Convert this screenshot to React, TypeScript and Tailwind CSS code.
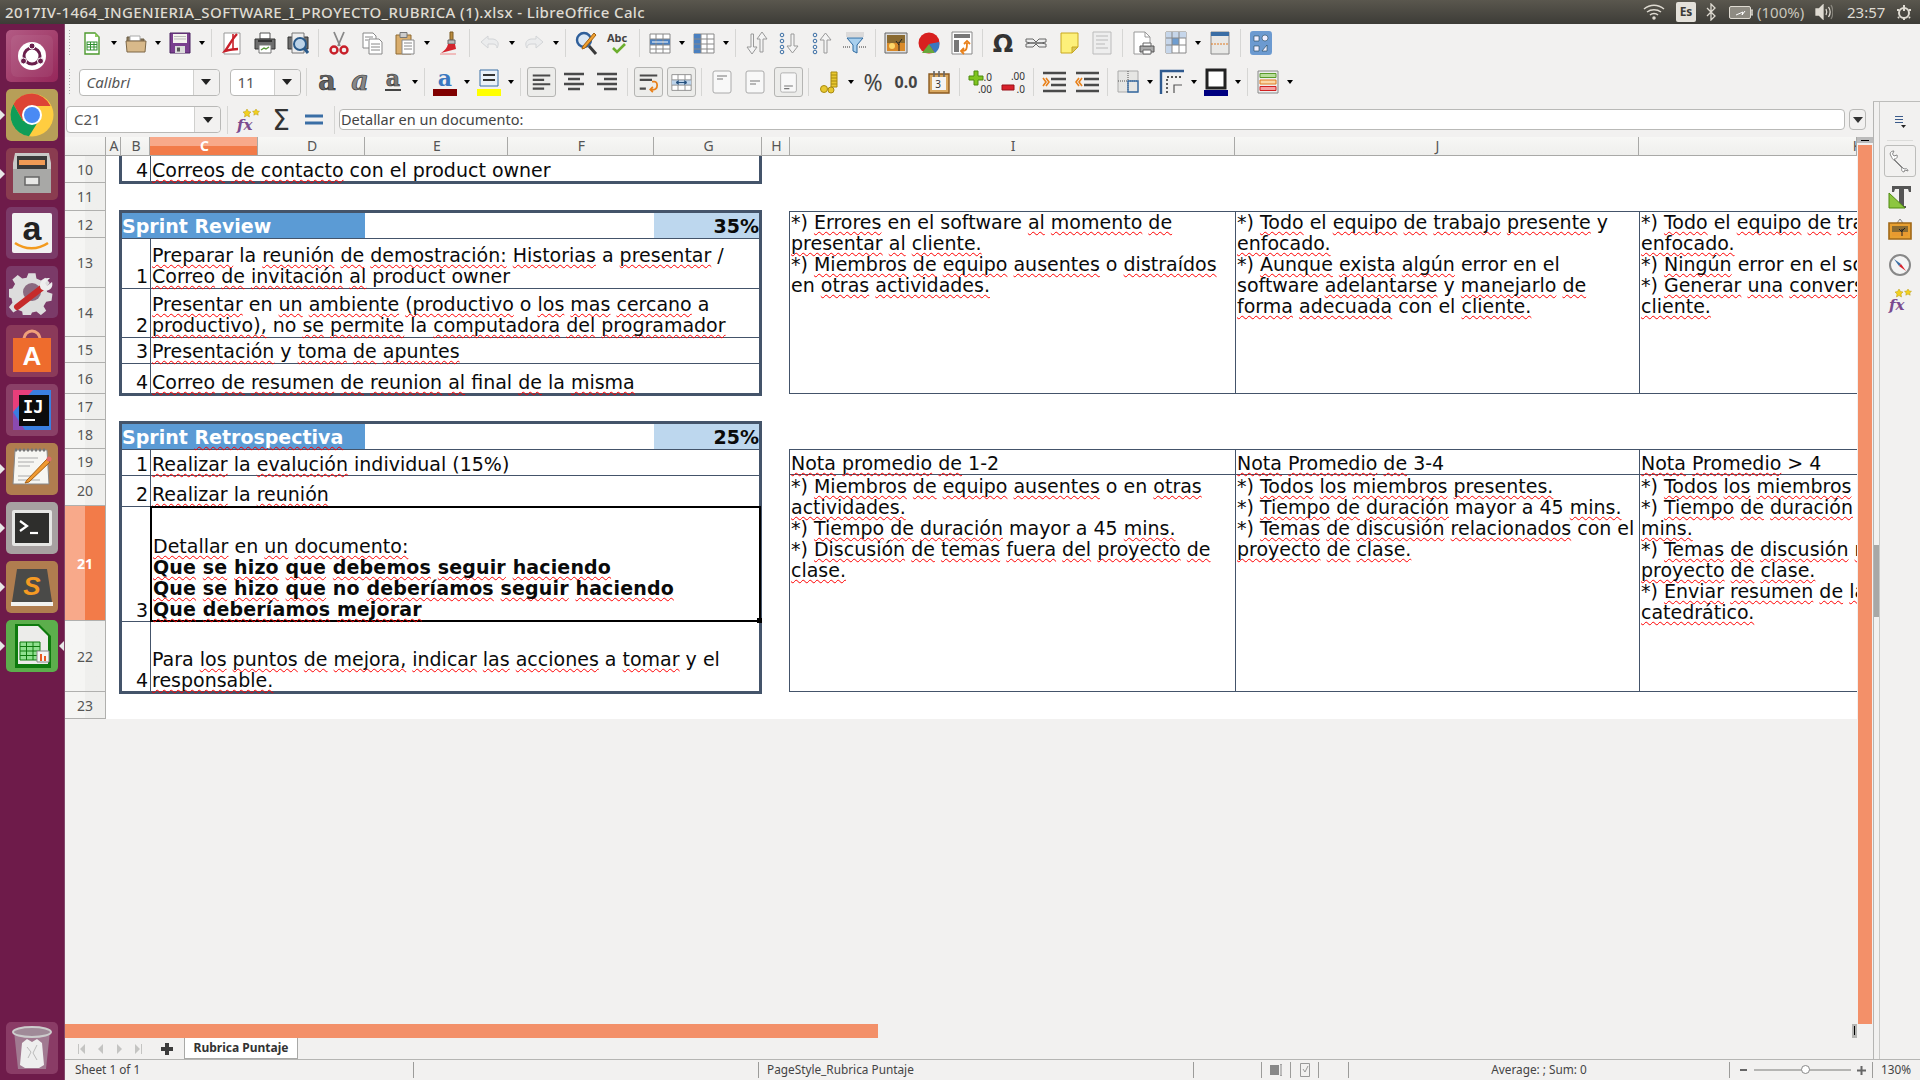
import type { ReactNode } from "react";

const UI = "font-['Noto_Sans',sans-serif]";

// "~word~" marks a word the spell checker flagged
function spell(line: string) {
  return line.split(/(~[^~]+~)/).map((part, i) =>
    part.startsWith("~") ? (
      <span
        key={i}
        className="underline decoration-wavy decoration-[#f00] decoration-1 underline-offset-[2px] [text-decoration-skip-ink:none]"
      >
        {part.slice(1, -1)}
      </span>
    ) : (
      <span key={i}>{part}</span>
    )
  );
}

const Svg = ({ children, s = 24 }: { children: ReactNode; s?: number }) => (
  <svg width={s} height={s} viewBox="0 0 24 24" fill="none" className="overflow-visible">
    {children}
  </svg>
);

const sheetGrid = (
  <>
    <rect x="7" y="11" width="10" height="8" fill="#fff" stroke="#2f8f2f" />
    <path d="M7 13.5h10M7 16h10M10.5 11v8M14 11v8" stroke="#2f8f2f" />
  </>
);

const lines = (d: string, w = 2, c = "#4a4a4a") => <path d={d} stroke={c} strokeWidth={w} />;

const icons: Record<string, ReactNode> = {
  new: (
    <>
      <path d="M5 2h10l4 4v17H5z" fill="#fff" stroke="#4e9a2e" strokeWidth="1.4" />
      <path d="M15 2l4 4h-4z" fill="#8fce5e" />
      {sheetGrid}
    </>
  ),
  open: (
    <>
      <path d="M3 6h7l2 2h8v4H3z" fill="#8c7a5c" stroke="#6b5c44" />
      <path d="M6 5h10v5H6z" fill="#fff" stroke="#aaa" />
      <path d="M2 10h20l-1 11H3z" fill="#d8b98a" stroke="#7c6747" />
    </>
  ),
  save: (
    <>
      <path d="M2 2h20v20H2z" fill="#7a3f8f" stroke="#4b2560" />
      <path d="M5 3h14v9H5z" fill="#f4f2ee" />
      <path d="M6 5.5h12M6 8h12" stroke="#bbb" />
      <path d="M7 15h10v7H7z" fill="#dcdcdc" />
      <path d="M9 16.5h3v4H9z" fill="#555" />
    </>
  ),
  pdf: (
    <>
      <path d="M4 2h16v21H4z" fill="#fff" stroke="#999" />
      <path d="M17 3C12 8 9 15 5 20c4-1 8-2 13-2" stroke="#c8202a" strokeWidth="2.4" />
      <path d="M13 3v15" stroke="#c8202a" strokeWidth="1.6" />
    </>
  ),
  print: (
    <>
      <path d="M7 2h10v6H7z" fill="#fff" stroke="#555" />
      <path d="M2 8h20v10H2z" fill="#6d6d6d" stroke="#333" />
      <path d="M5 10h14" stroke="#333" strokeWidth="2" />
      <path d="M6 14h12v8H6z" fill="#fff" stroke="#777" />
      <path d="M8 19l3-2 2 1 3-2" stroke="#5a9a3a" strokeWidth="1.4" />
    </>
  ),
  preview: (
    <>
      <path d="M2 6h20v12H2z" fill="#6d6d6d" stroke="#333" />
      <path d="M6 2h12v20H6z" fill="#eee" stroke="#777" />
      <circle cx="14" cy="13" r="6" fill="#bcd3e8" stroke="#2a5a8a" strokeWidth="2" />
      <path d="M18 17l4 5" stroke="#2a5a8a" strokeWidth="3" />
    </>
  ),
  cut: (
    <>
      <path d="M7 1l6 14M17 1l-6 14" stroke="#888" strokeWidth="1.8" />
      <circle cx="7" cy="19" r="3.5" stroke="#c8202a" strokeWidth="2.4" />
      <circle cx="17" cy="19" r="3.5" stroke="#c8202a" strokeWidth="2.4" />
    </>
  ),
  copy: (
    <>
      <path d="M3 2h10l3 3v12H3z" fill="#fff" stroke="#888" />
      <path d="M9 8h10l3 3v12H9z" fill="#fff" stroke="#888" />
      <path d="M5 6h8M5 9h3M11 13h9M11 16h9M11 19h9" stroke="#888" />
    </>
  ),
  paste: (
    <>
      <path d="M3 4h15v19H3z" fill="#d9ad6c" stroke="#8f6a32" />
      <path d="M7 1.5h7v5H7z" fill="#ccc" stroke="#777" />
      <path d="M9 9h12v14H9z" fill="#fff" stroke="#888" />
      <path d="M11 12h8M11 15h8M11 18h8" stroke="#888" />
    </>
  ),
  brush: (
    <>
      <path d="M13 1h3v8h-3z" fill="#b98b3e" stroke="#7c5a22" />
      <path d="M11 9h7v4h-7z" fill="#bbb" stroke="#666" />
      <path d="M11 13h7l1 5-15 4c4-3 6-5 7-9z" fill="#d3242c" />
      <path d="M3 23h16" stroke="#e88" />
    </>
  ),
  undo: (
    <g opacity=".35">
      <path d="M10 5L3 11l7 6v-4h5c3 0 4 2 4 4 2-3 2-8-4-9h-5z" fill="#dfe3e8" stroke="#9aa2aa" />
    </g>
  ),
  redo: (
    <g opacity=".35">
      <path d="M14 5l7 6-7 6v-4H9c-3 0-4 2-4 4-2-3-2-8 4-9h5z" fill="#dfe3e8" stroke="#9aa2aa" />
    </g>
  ),
  find: (
    <>
      <circle cx="10" cy="9" r="7" fill="#dbe8f5" stroke="#2f5f9a" strokeWidth="2.4" />
      <path d="M15 15l7 8" stroke="#3a3a3a" strokeWidth="3" />
      <path d="M20 2L9 15l-1 3 3-1L22 4z" fill="#f0a030" stroke="#a06010" />
    </>
  ),
  abc: (
    <>
      <text x="0" y="11" fontSize="11" fontWeight="700" fill="#444" fontFamily="Noto Sans">
        Abc
      </text>
      <path d="M6 17l4 4 8-8" stroke="#6cae2e" strokeWidth="2.6" />
    </>
  ),
  rows: (
    <>
      <path d="M2 3h20v19H2z" fill="#fff" stroke="#888" />
      <path d="M2 8h20v6H2z" fill="#4a80c0" />
      <path d="M2 8h20M2 14h20M2 18h20M8 3v19M15 3v19" stroke="#888" />
      <path d="M4 11h16" stroke="#fff" />
    </>
  ),
  cols: (
    <>
      <path d="M2 3h20v19H2z" fill="#fff" stroke="#888" />
      <path d="M2 3h7v19H2z" fill="#4a80c0" />
      <path d="M2 8h20M2 13h20M2 18h20M9 3v19M15 3v19" stroke="#888" />
    </>
  ),
  sort: (
    <>
      <path d="M7 3v13H3l5 7 5-7H9.5V3z" fill="#f4f4f4" stroke="#999" />
      <path d="M16 21V8h-3l5-7 5 7h-4v13z" fill="#f4f4f4" stroke="#999" />
    </>
  ),
  sortAsc: (
    <>
      <circle cx="5" cy="4" r="1.8" stroke="#3a6ea5" />
      <circle cx="5" cy="10" r="1.8" stroke="#3a6ea5" />
      <circle cx="5" cy="16" r="1.8" stroke="#3a6ea5" />
      <circle cx="5" cy="21" r="1.8" stroke="#3a6ea5" />
      <path d="M14 3v12h-4l5.5 7 5.5-7h-4V3z" fill="#f4f4f4" stroke="#999" />
    </>
  ),
  sortDesc: (
    <>
      <circle cx="5" cy="4" r="1.8" stroke="#3a6ea5" />
      <circle cx="5" cy="10" r="1.8" stroke="#3a6ea5" />
      <circle cx="5" cy="16" r="1.8" stroke="#3a6ea5" />
      <circle cx="5" cy="21" r="1.8" stroke="#3a6ea5" />
      <path d="M14 22V9h-4l5.5-7 5.5 7h-4v13z" fill="#f4f4f4" stroke="#999" />
    </>
  ),
  filter: (
    <>
      <path d="M3 1h18v5H3z" fill="#ccc" opacity=".6" />
      <path d="M4 7h16l-6 7v8l-4-2v-6z" fill="#a9d0ee" stroke="#2f6aa0" />
      <path d="M0 16h8M16 16h8" stroke="#333" strokeDasharray="1 1" />
    </>
  ),
  image: (
    <>
      <path d="M1 2h22v20H1z" fill="#ddd" stroke="#666" />
      <path d="M3 4h18v16H3z" fill="#d98a2a" />
      <path d="M3 4h18v8H3z" fill="#8a6a30" />
      <path d="M15 20v-9m0 3l-3-4m3 2l3-4" stroke="#222" />
      <circle cx="8" cy="15" r="3" fill="#fcd76a" />
    </>
  ),
  chart: (
    <>
      <circle cx="12" cy="12" r="10.5" fill="#d8201f" />
      <path d="M12 13L5 22h13z" fill="#6aa83a" />
      <path d="M12 13l10-2c1 4 0 8-4 11z" fill="#3a78c0" />
    </>
  ),
  pivot: (
    <>
      <path d="M2 1h20v22H2z" fill="#fff" stroke="#888" />
      <path d="M4 3h16v4H4zM4 9h5v12H4z" fill="#777" />
      <path d="M12 20c5 0 5-3 5-8M14 17l-3 3 3 3M14 13l3-3 3 3" stroke="#e8801a" strokeWidth="1.8" />
    </>
  ),
  omega: (
    <text x="12" y="21" textAnchor="middle" fontSize="24" fontWeight="700" fill="#333" fontFamily="DejaVu Sans">
      Ω
    </text>
  ),
  link: (
    <>
      <path d="M2 8h7l3 3 3-3h7v3l-5 1 5 1v3h-7l-3-3-3 3H2v-3l5-1-5-1z" fill="#eee" stroke="#666" />
      <path d="M7 12h10" stroke="#555" strokeWidth="1.4" />
    </>
  ),
  note: (
    <>
      <path d="M4 2h17v14l-6 6H4z" fill="#fdf07a" stroke="#c8a820" />
      <path d="M21 16h-6v6z" fill="#d9c85a" stroke="#c8a820" />
    </>
  ),
  header: (
    <>
      <path d="M3 1h18v22H3z" fill="#eee" stroke="#bbb" />
      {lines("M6 5h12M6 9h12M6 13h9M6 17h12", 1.4, "#ccc")}
    </>
  ),
  printArea: (
    <>
      <path d="M3 1h11l5 5v17H3z" fill="#fff" stroke="#999" />
      <path d="M14 1v5h5" stroke="#999" />
      <path d="M9 15h14v6H9z" fill="#aaa" stroke="#555" />
      <path d="M12 12h8v3h-8zM12 19h8v4h-8z" fill="#fff" stroke="#666" />
    </>
  ),
  freeze: (
    <>
      <path d="M2 1h20v21H2z" fill="#fff" stroke="#888" />
      <path d="M2 1h20v6H2zM2 7h6v15H2z" fill="#c6d6ea" />
      <path d="M8 7h7v7H8z" fill="#6e9dd0" />
      <path d="M8 1v21M15 1v21M2 7h20M2 14h20" stroke="#888" />
    </>
  ),
  split: (
    <>
      <path d="M3 1h18v22H3z" fill="#e8e8e6" stroke="#888" />
      <path d="M3 1h18v4H3z" fill="#3a6ea5" />
      <path d="M3 13h18" stroke="#e07b20" strokeDasharray="2 1" />
    </>
  ),
  navigator: (
    <>
      <rect x="1" y="0" width="22" height="24" rx="3" fill="#6c9ad0" />
      <path d="M5 5h5v5H5zM5 15h5v5H5z" fill="#eef" stroke="#245" strokeWidth=".6" />
      <circle cx="16" cy="7" r="3" fill="#eef" stroke="#245" strokeWidth=".6" />
      <path d="M13 20l5-6v6z" fill="#eef" stroke="#245" strokeWidth=".6" />
    </>
  ),
  bold: <text x="12" y="20" textAnchor="middle" fontSize="27" fontWeight="700" fill="#666" stroke="#333" strokeWidth=".7" fontFamily="DejaVu Serif">a</text>,
  italic: <text x="12" y="20" textAnchor="middle" fontSize="27" fontStyle="italic" fontWeight="700" fill="#888" stroke="#333" strokeWidth=".7" fontFamily="DejaVu Serif">a</text>,
  underline: (
    <>
      <text x="12" y="16" textAnchor="middle" fontSize="22" fontWeight="700" fill="#777" stroke="#333" strokeWidth=".6" fontFamily="DejaVu Serif">a</text>
      <path d="M4 20h16" stroke="#444" strokeWidth="2" />
    </>
  ),
  fontColor: (
    <>
      <text x="12" y="16" textAnchor="middle" fontSize="22" fontWeight="700" fill="#3a78c0" fontFamily="DejaVu Serif">a</text>
      <path d="M0 19h24v7H0z" fill="#800000" />
    </>
  ),
  highlight: (
    <>
      <path d="M3 0h18v16H3z" fill="#eaf1f8" stroke="#3a6ea5" />
      <path d="M6 5h12M6 10h12" stroke="#333" strokeWidth="2" />
      <path d="M0 19h24v7H0z" fill="#ffff00" />
    </>
  ),
  left: lines("M2 4h20M2 9h13M2 14h20M2 19h13", 2.4),
  center: lines("M2 4h20M6 9h12M2 14h20M6 19h12", 2.4),
  right: lines("M2 4h20M9 9h13M2 14h20M9 19h13", 2.4),
  wrap: (
    <>
      {lines("M2 4h20M2 9h14M2 19h7", 2.4)}
      <path d="M16 11h3c4 0 4 9-1 9h-4m3-3l-3 3 3 3" stroke="#e8801a" strokeWidth="2" />
    </>
  ),
  merge: (
    <>
      <path d="M1 3h22v18H1z" fill="#fff" stroke="#888" />
      <path d="M1 9h22v6H1z" fill="#bcd3ea" />
      <path d="M1 9h22M1 15h22M8 3v6M16 3v6M8 15v6M16 15v6" stroke="#888" />
      <path d="M6 12h12M6 12l3-2m-3 2l3 2M18 12l-3-2m3 2l-3 2" stroke="#24507e" strokeWidth="1.4" />
    </>
  ),
  top: (
    <>
      <rect x="3" y="1" width="18" height="22" rx="2" fill="#f8f8f8" stroke="#aaa" />
      {lines("M7 6h10M7 9h6", 1.2, "#777")}
    </>
  ),
  middle: (
    <>
      <rect x="3" y="1" width="18" height="22" rx="2" fill="#f8f8f8" stroke="#aaa" />
      {lines("M7 11h10M7 14h6", 1.2, "#777")}
    </>
  ),
  bottom: (
    <>
      <rect x="3" y="1" width="18" height="22" rx="2" fill="#f8f8f8" stroke="#aaa" />
      {lines("M7 16h10M7 19h6", 1.2, "#777")}
    </>
  ),
  currency: (
    <>
      <path d="M14 2h6v15h-6z" fill="#e8c830" stroke="#a88a10" />
      <path d="M14 5h6M14 8h6M14 11h6M14 14h6" stroke="#a88a10" />
      <circle cx="7" cy="19" r="3.5" fill="#e8c830" stroke="#a88a10" />
      <circle cx="14" cy="20" r="3" fill="#e8c830" stroke="#a88a10" />
    </>
  ),
  percent: (
    <text x="12" y="21" textAnchor="middle" fontSize="23" fill="#444" fontFamily="Noto Sans">
      %
    </text>
  ),
  number: (
    <text x="12" y="18" textAnchor="middle" fontSize="16" fontWeight="700" fill="#444" fontFamily="Noto Sans">
      0.0
    </text>
  ),
  date: (
    <>
      <path d="M2 4h20v19H2z" fill="#d9a860" stroke="#8a5a20" strokeWidth="1.4" />
      <path d="M5 7h14v13H5z" fill="#f4f4f4" />
      <path d="M7 1v6M12 1v6M17 1v6" stroke="#666" strokeWidth="1.6" />
      <text x="11" y="18" textAnchor="middle" fontSize="10" fill="#333" fontFamily="Noto Sans">3</text>
    </>
  ),
  addDec: (
    <>
      <path d="M6 1h4v5h5v4h-5v5H6v-5H1V6h5z" fill="#7fc41e" stroke="#4e8a10" />
      <text x="24" y="11" textAnchor="end" fontSize="10" fill="#333" fontFamily="Noto Sans">.0</text>
      <text x="24" y="23" textAnchor="end" fontSize="10" fill="#333" fontFamily="Noto Sans">.00</text>
    </>
  ),
  remDec: (
    <>
      <path d="M1 15h12v5H1z" fill="#d8202a" stroke="#981018" />
      <text x="24" y="10" textAnchor="end" fontSize="10" fill="#333" fontFamily="Noto Sans">.00</text>
      <text x="24" y="23" textAnchor="end" fontSize="10" fill="#333" fontFamily="Noto Sans">.0</text>
    </>
  ),
  indent: (
    <>
      {lines("M1 3h23M9 9h15M9 15h15M1 21h23", 2.4)}
      <path d="M1 8l3 4-3 4M4 8l3 4-3 4" stroke="#e8801a" strokeWidth="1.6" />
    </>
  ),
  outdent: (
    <>
      {lines("M1 3h23M9 9h15M9 15h15M1 21h23", 2.4)}
      <path d="M4 8l-3 4 3 4M7 8l-3 4 3 4" stroke="#e8801a" strokeWidth="1.6" />
    </>
  ),
  borders: (
    <>
      <path d="M2 1h20v21H2z" fill="#e6e6e4" stroke="#aaa" />
      <path d="M12 1v21M2 11h20" stroke="#555" strokeDasharray="1 1" />
      <path d="M12 11h10v11H12z" fill="none" stroke="#3a6ea5" strokeWidth="1.4" />
    </>
  ),
  borderStyle: (
    <>
      <path d="M1 24V1h23" stroke="#2f5a8f" strokeWidth="2.4" />
      <path d="M7 23V7h15" stroke="#222" strokeDasharray="2 2" strokeWidth="1.4" />
      <path d="M14 23v-8h8" stroke="#555" strokeWidth="1.2" />
    </>
  ),
  borderColor: (
    <>
      <path d="M3 0h18v18H3z" fill="#fff" stroke="#222" strokeWidth="3" />
      <path d="M0 20h24v6H0z" fill="#000080" />
    </>
  ),
  cond: (
    <>
      <path d="M2 1h20v22H2z" fill="#eee" stroke="#888" />
      <path d="M4 3.5h16v4H4z" fill="#b9dd9a" stroke="#5a9a2a" />
      <path d="M4 10h16v4H4z" fill="#fad7a8" stroke="#e07b20" />
      <path d="M4 16.5h16v4H4z" fill="#f5a0a0" stroke="#d02020" />
    </>
  ),
  fx: (
    <>
      <text x="1" y="22" fontSize="15" fontStyle="italic" fontWeight="700" fill="#7a4a8f" fontFamily="DejaVu Serif">fx</text>
      <path d="M11 1l1.5 2.5L15 4l-2 2 .5 3-2.5-1.5L8.500 9l.5-3-2-2 2.5-.5zM20 1l1.2 2 2.3.3-1.7 1.600.4 2.300-2.200-1.100-2.200 1.100.4-2.300L16.500 3.300l2.300-.3z" fill="#f2d020" stroke="#b89a10" strokeWidth=".5" />
    </>
  ),
  sigma: (
    <text x="12" y="22" textAnchor="middle" fontSize="28" fill="#333" fontFamily="DejaVu Sans">Σ</text>
  ),
  equal: <path d="M3 8h18M3 15h18" stroke="#3a6ea5" strokeWidth="3" />,
  wrench: (
    <path d="M3 7c-2-3 0-5 3-5L4.500 5l1.500 2 3-1c1 3-1 4-3 4l10 10c2-1 4 0 4 2l-3-1-1 2c-2 0-3-2-2-4L6 11C5 11 4 9 3 7z" fill="#fff" stroke="#888" />
  ),
  sideProps: (
    <>
      <path d="M4 1h19v6h-2l-1-3h-4v17h2v2h-9v-2h2V4H7L6 7H4z" fill="#555" />
      <path d="M1 23V8l16 15z" fill="#8cc63f" stroke="#4e8a10" />
    </>
  ),
  gallery: (
    <>
      <path d="M12 1l3 4H9z" stroke="#888" />
      <path d="M1 5h22v16H1z" fill="#e8a030" stroke="#a06818" strokeWidth="1.6" />
      <path d="M4 8h16v10H4z" fill="#8a6a30" />
      <path d="M4 14h16v4H4z" fill="#e89a30" />
      <path d="M14 18v-7m0 3l-3-3m3 2l3-3" stroke="#222" />
    </>
  ),
  compass: (
    <>
      <circle cx="12" cy="12" r="10" fill="#f4f4f4" stroke="#888" strokeWidth="2" />
      <path d="M6 6l7 5-2 2z" fill="#3a6ea5" />
      <path d="M18 18l-7-5 2-2z" fill="#d8202a" />
    </>
  ),
};

function Tool({ name, on, s = 24 }: { name: string; on?: boolean; s?: number }) {
  return (
    <div className="w-[33px] h-[30px] flex items-center justify-center shrink-0">
      <div className={on ? "w-[29px] h-[30px] flex items-center justify-center rounded-[3px] border border-[#b5b5b3] bg-[#ececea]" : "flex"}>
        <Svg s={on ? 21 : s}>{icons[name]}</Svg>
      </div>
    </div>
  );
}

const Arrow = () => (
  <div className="w-[11px] flex justify-center shrink-0">
    <div className="border-x-[3px] border-x-transparent border-t-[4px] border-t-black" />
  </div>
);

const Sep = () => (
  <div className="w-[8px] flex justify-center shrink-0">
    <div className="w-px h-[28px] bg-[#d6d6d4]" />
  </div>
);

function Tools({ items }: { items: string }) {
  return (
    <>
      {items.split(" ").map((it, i) =>
        it === "v" ? (
          <Arrow key={i} />
        ) : it === "|" ? (
          <Sep key={i} />
        ) : it.endsWith("!") ? (
          <Tool key={i} name={it.slice(0, -1)} on />
        ) : (
          <Tool key={i} name={it} />
        )
      )}
    </>
  );
}

function Combo({ w, text, italic }: { w: string; text: string; italic?: boolean }) {
  return (
    <div className={`${w} h-[27px] flex items-stretch border border-[#b9b9b7] rounded-[4px] bg-white shrink-0`}>
      <span className={`flex-1 pl-[7px] text-[15px] leading-[25px] text-[#555] ${italic ? "italic" : ""}`}>{text}</span>
      <span className="w-[26px] flex items-center justify-center border-l border-[#d0d0ce] bg-[#f2f1f0] rounded-r-[4px]">
        <span className="border-x-[5px] border-x-transparent border-t-[6px] border-t-[#222]" />
      </span>
    </div>
  );
}

function Tile({ bg, left, right, children }: { bg: string; left?: boolean; right?: boolean; children: ReactNode }) {
  return (
    <div className="relative w-[64px] h-[52px] flex shrink-0 pl-[6px]">
      {left && <span className="absolute left-0 top-[21px] border-y-[5px] border-y-transparent border-l-[5px] border-l-[#e8e8e8]" />}
      {right && <span className="absolute right-0 top-[21px] border-y-[5px] border-y-transparent border-r-[5px] border-r-[#e8e8e8]" />}
      <div className={`w-[52px] h-[52px] rounded-[5px] flex items-center justify-center ${bg}`}>
        <svg width="46" height="46" viewBox="0 0 46 46" fill="none">
          {children}
        </svg>
      </div>
    </div>
  );
}

function Launcher() {
  return (
    <div className="w-[65px] shrink-0 flex flex-col gap-[7px] pt-[6px] pb-[6px] bg-[#6e1b4a] border-r border-[#82486b]">
      <Tile bg="bg-linear-to-br from-[#b25a84] to-[#96265a]">
        <rect x="2" y="2" width="42" height="42" rx="6" fill="#fff" opacity=".06" />
        <circle cx="23" cy="23" r="14" fill="#fff" />
        <circle cx="23" cy="23" r="8" stroke="#6a1f4c" strokeWidth="3" />
        <circle cx="23" cy="13" r="3" fill="#6a1f4c" stroke="#fff" />
        <circle cx="14.5" cy="28" r="3" fill="#6a1f4c" stroke="#fff" />
        <circle cx="31.5" cy="28" r="3" fill="#6a1f4c" stroke="#fff" />
      </Tile>
      <Tile left bg="bg-[#b79f58]">
        <circle cx="23" cy="23" r="21.5" fill="#ffcd40" />
        <path d="M23 1.500A21.500 21.500 0 0 0 4.400 12.200L14 29 23 14h18.600A21.500 21.500 0 0 0 23 1.500z" fill="#dd4435" />
        <path d="M4.400 12.200A21.500 21.500 0 0 0 20 44.300L29.500 29 14 29z" fill="#0f9d58" />
        <circle cx="23" cy="23" r="10" fill="#fff" />
        <circle cx="23" cy="23" r="8" fill="#4a8af4" />
      </Tile>
      <Tile left bg="bg-[#8a3c50]">
        <path d="M6 2h34l2 10v30H4V12z" fill="#c9c9c7" />
        <path d="M8 5h30v14H8z" fill="#3a3a3a" />
        <path d="M10 9h26v5H10z" fill="#f09a55" />
        <path d="M4 18h38v24H4z" fill="#a8a8a6" />
        <path d="M16 26h14v8H16z" fill="#e8e8e6" stroke="#666" strokeWidth="1.5" />
      </Tile>
      <Tile bg="bg-[#7b3a68]">
        <rect x="3" y="3" width="40" height="40" rx="2" fill="#f2f2f2" />
        <text x="23" y="30" textAnchor="middle" fontSize="34" fontWeight="700" fill="#222" fontFamily="Liberation Sans">a</text>
        <path d="M6 33c10 7 23 7 33 0" stroke="#f39a1e" strokeWidth="2.5" />
      </Tile>
      <Tile bg="bg-[#7b3a68]">
        <path d="M19 2h8l1 6 5 2 5-3 5 6-4 5 1 5 6 2-1 8-6 1-3 5 3 5-6 5-5-4-5 1-2 5h-8l-1-6-5-2-5 3-5-6 4-5-1-5-6-2 1-8 6-1 3-5-3-5 6-5 5 4 5-1z" fill="#ddd" transform="translate(2.5 2.5) scale(.89)" />
        <circle cx="23" cy="23" r="9" fill="#8a6a80" />
        <path d="M8 38l26-20" stroke="#c62a2a" strokeWidth="6" strokeLinecap="round" />
        <path d="M32 20c-3-5 1-12 9-11l-5 5 2 3 5-4c2 7-5 11-11 7z" fill="#eee" />
      </Tile>
      <Tile bg="bg-[#8b3a5a]">
        <path d="M15 12c0-12 16-12 16 0" stroke="#f0a07a" strokeWidth="3" />
        <path d="M4 10h38v34H4z" fill="#ee6c2d" />
        <text x="23" y="37" textAnchor="middle" fontSize="26" fontWeight="700" fill="#fff" fontFamily="Liberation Sans">A</text>
      </Tile>
      <Tile bg="bg-[#8a4067]">
        <path d="M4 3h38v40H4z" fill="#3a7fe0" />
        <path d="M4 3h20L4 25z" fill="#e83e7a" />
        <path d="M4 25l12 18H4z" fill="#8a4ab0" />
        <path d="M10 8h30v31H10z" fill="#0c0c0c" />
        <text x="14" y="26" fontSize="17" fontWeight="700" fill="#fff" fontFamily="DejaVu Sans Mono">IJ</text>
        <path d="M14 33h12" stroke="#fff" strokeWidth="2" />
      </Tile>
      <Tile left bg="bg-[#b07d4f]">
        <path d="M6 4h32l2 34H4z" fill="#f6f6f2" stroke="#888" />
        <path d="M6 4h32" stroke="#777" strokeWidth="3" strokeDasharray="2 2" />
        <path d="M9 12h20M9 16h16M9 20h12M9 30h16M9 34h22" stroke="#aaa" />
        <path d="M18 34L38 13l3 3-21 20-4 1z" fill="#f09a30" stroke="#a86010" />
        <circle cx="40" cy="13" r="2.5" fill="#e06a6a" />
      </Tile>
      <Tile left bg="bg-[#a7a1a1]">
        <rect x="3" y="5" width="40" height="36" rx="2" fill="#e6e6e4" />
        <rect x="6" y="8" width="34" height="30" fill="#2e2e2c" />
        <path d="M11 16l7 5-7 5" stroke="#fff" strokeWidth="2.2" />
        <path d="M21 28h8" stroke="#fff" strokeWidth="2.2" />
      </Tile>
      <Tile left bg="bg-[#b07d4f]">
        <path d="M3 38L8 5h30l5 33z" fill="#4a4a48" />
        <path d="M2 38h42v4H2z" fill="#f2f2f0" />
        <text x="23" y="31" textAnchor="middle" fontSize="26" fontStyle="italic" fontWeight="700" fill="#f59a23" fontFamily="Liberation Sans">S</text>
      </Tile>
      <Tile left right bg="bg-[#5cae4c]">
        <path d="M6 1h24l12 12v32H6z" fill="#0e7a0e" />
        <path d="M9 3h20l10 10v28H9z" fill="#ececea" />
        <path d="M11 19h20v18H11z" fill="#8fe08f" stroke="#0e7a0e" />
        <path d="M11 23.5h20M11 28h20M11 32.5h20M17.5 19v18M24 19v18" stroke="#0e7a0e" />
        <path d="M28 28h12v11H28z" fill="#f4f4f4" stroke="#888" />
        <path d="M31 31v7h2v-7zM35 33v5h2v-5z" fill="#e85a20" />
      </Tile>
      <div className="mt-auto">
        <Tile bg="bg-[#8a3c66]">
          <path d="M5 6h36l-4 38H9z" fill="#a68a9c" opacity=".8" />
          <ellipse cx="23" cy="7" rx="19" ry="5" fill="#a08a98" stroke="#ccc" strokeWidth="2" />
          <path d="M13 18l5-4 5 3 5-3 5 4 2 22-5 3H16l-5-3z" fill="#eeeeee" />
          <path d="M18 22l4 5-3 6M28 20l-4 8 4 7" stroke="#bbb" />
        </Tile>
      </div>
    </div>
  );
}

function ColHead({ w, label, active, inner }: { w: string; label: string; active?: boolean; inner?: string }) {
  return (
    <div
      className={`${w} shrink-0 overflow-hidden border-r border-[#a9a9a7] text-[14px] leading-[18px] text-center pl-[2px] ${
        active ? "bg-linear-to-b from-[#f8a98a] from-50% to-[#f27b49] to-50% text-white font-bold" : "text-[#555]"
      }`}
    >
      <div className={inner}>{label}</div>
    </div>
  );
}

const rowHeads: [string, string][] = [
  ["10", "h-[27px]"],
  ["11", "h-[28px]"],
  ["12", "h-[27px]"],
  ["13", "h-[50px]"],
  ["14", "h-[49px]"],
  ["15", "h-[26px]"],
  ["16", "h-[31px]"],
  ["17", "h-[26px]"],
  ["18", "h-[29px]"],
  ["19", "h-[26px]"],
  ["20", "h-[31px]"],
  ["21", "h-[115px]"],
  ["22", "h-[71px]"],
  ["23", "h-[27px]"],
];

function Row({ h, n, children, last, lift }: { h: string; n: string; children?: ReactNode; last?: boolean; lift?: boolean }) {
  return (
    <div className={`${h} flex ${last ? "" : "border-b border-[#44546a]"}`}>
      <div className={`w-[29px] shrink-0 border-r border-[#44546a] self-stretch flex items-end justify-end pr-[2px] ${lift ? "pb-px" : ""}`}>{n}</div>
      <div className={`flex-1 pl-px self-end whitespace-nowrap ${lift ? "pb-px" : ""}`}>{children}</div>
    </div>
  );
}

function HeadRow({ title, pct }: { title: string; pct: string }) {
  return (
    <div className="h-[26px] flex border-b border-[#44546a] font-bold">
      <div className="w-[243px] bg-[#5b9bd5] text-white flex items-end pb-px whitespace-nowrap">
        <div>{spell(title)}</div>
      </div>
      <div className="flex-1" />
      <div className="w-[105px] bg-[#bdd7ee] flex items-end justify-end pb-px">{pct}</div>
    </div>
  );
}

function Lines({ rows }: { rows: string[] }) {
  return (
    <>
      {rows.map((r, i) => (
        <div key={i}>{spell(r)}</div>
      ))}
    </>
  );
}

function RightCell({ rows, last, top }: { rows: string[]; last?: boolean; top?: boolean }) {
  return (
    <div className={`h-full overflow-hidden whitespace-nowrap pl-px ${top ? "pt-px" : ""} ${last ? "" : "border-r border-[#44546a]"}`}>
      <Lines rows={rows} />
    </div>
  );
}

function Sheet() {
  return (
    <div className="flex-1 min-w-0 flex flex-col">
      <div className="h-[18px] flex border-b border-[#a9a9a7] bg-linear-to-b from-[#f7f7f5] to-[#efefed] box-content">
        <div className="w-[41px] shrink-0 border-r border-[#a9a9a7]" />
        <ColHead w="w-[15px]" label="A" />
        <ColHead w="w-[29px]" label="B" />
        <ColHead w="w-[108px]" label="C" active />
        <ColHead w="w-[107px]" label="D" />
        <ColHead w="w-[143px]" label="E" />
        <ColHead w="w-[146px]" label="F" />
        <ColHead w="w-[108px]" label="G" />
        <ColHead w="w-[28px]" label="H" />
        <ColHead w="w-[445px]" label="I" />
        <ColHead w="w-[404px]" label="J" />
        <ColHead w="w-[218px]" label="K" inner="w-[432px]" />
      </div>
      <div className="flex">
        <div className="w-[41px] shrink-0 flex flex-col">
          {rowHeads.map(([n, h]) => (
            <div
              key={n}
              className={`${h} flex items-center justify-center border-r border-b border-[#b0b0ae] text-[14px] ${
                n === "21"
                  ? "bg-linear-to-r from-[#f8a98a] from-50% to-[#f27b49] to-50% text-white font-bold"
                  : "bg-linear-to-r from-[#f5f5f3] from-50% to-[#efefed] to-50% text-[#555]"
              }`}
            >
              {n}
            </div>
          ))}
        </div>
        <div className="flex-1 min-w-0 bg-white overflow-hidden font-['DejaVu_Sans',sans-serif] text-[19px] leading-[21px] text-[#0a0a0a] grid grid-cols-[13px_643px_27px_446px_404px_218px] grid-rows-[28px_26px_186px_25px_273px_24px]">
          <div className="col-start-2 row-start-1 border-x-[3px] border-b-[3px] border-[#44546a]">
            <Row h="h-[25px]" n="4" last>
              {spell("~Correos~ ~de~ ~contacto~ con el product owner")}
            </Row>
          </div>

          <div className="col-start-2 row-start-3 border-[3px] border-[#44546a] flex flex-col">
            <HeadRow title="Sprint Review" pct="35%" />
            <Row h="h-[50px]" n="1" lift>
              <Lines rows={["~Preparar~ la ~reunión~ ~de~ ~demostración:~ ~Historias~ a ~presentar~ /", "~Correo~ ~de~ ~invitación~ ~al~ product owner"]} />
            </Row>
            <Row h="h-[49px]" n="2" lift>
              <Lines rows={["~Presentar~ en ~un~ ~ambiente~ ~(productivo~ o ~los~ ~mas~ ~cercano~ a", "~productivo),~ no ~se~ ~permite~ la ~computadora~ ~del~ ~programador~"]} />
            </Row>
            <Row h="h-[26px]" n="3" lift>
              {spell("~Presentación~ y ~toma~ ~de~ ~apuntes~")}
            </Row>
            <Row h="h-[29px]" n="4" last>
              {spell("~Correo~ ~de~ ~resumen~ ~de~ ~reunion~ ~al~ final ~de~ la ~misma~")}
            </Row>
          </div>

          <div className="col-start-4 col-span-3 row-start-3 mt-px mb-[2px] border-y border-l border-[#44546a] grid grid-cols-[446px_404px_218px]">
            <RightCell rows={["*) ~Errores~ en el software ~al~ ~momento~ ~de~", "~presentar~ ~al~ ~cliente.~", "*) ~Miembros~ ~de~ ~equipo~ ~ausentes~ o ~distraídos~", "en ~otras~ ~actividades.~"]} />
            <RightCell rows={["*) ~Todo~ el ~equipo~ ~de~ ~trabajo~ ~presente~ y", "~enfocado.~", "*) ~Aunque~ ~exista~ ~algún~ error en el", "software ~adelantarse~ y ~manejarlo~ ~de~", "~forma~ ~adecuada~ con el ~cliente.~"]} />
            <RightCell last rows={["*) ~Todo~ el ~equipo~ ~de~ ~trabajo~ ~presente~ y", "~enfocado.~", "*) ~Ningún~ error en el software", "*) ~Generar~ ~una~ ~conversación~ con el", "~cliente.~"]} />
          </div>

          <div className="col-start-2 row-start-5 border-[3px] border-[#44546a] flex flex-col">
            <HeadRow title="Sprint ~Retrospectiva~" pct="25%" />
            <Row h="h-[26px]" n="1">
              {spell("~Realizar~ la ~evalución~ individual (15%)")}
            </Row>
            <Row h="h-[31px]" n="2" lift>
              {spell("~Realizar~ la ~reunión~")}
            </Row>
            <div className="h-[115px] flex border-b border-[#44546a]">
              <div className="w-[29px] shrink-0 border-r border-[#44546a] flex items-end justify-end pr-[2px]">3</div>
              <div className="relative flex-1 -mt-px -mr-[2px] -mb-px -ml-px pl-px border-2 border-black flex flex-col justify-end whitespace-nowrap">
                <div>{spell("~Detallar~ en ~un~ ~documento:~")}</div>
                <div className="font-bold tracking-[0.15px]">
                  <Lines rows={["~Que~ ~se~ ~hizo~ ~que~ ~debemos~ ~seguir~ ~haciendo~", "~Que~ ~se~ ~hizo~ ~que~ no ~deberíamos~ ~seguir~ ~haciendo~", "~Que~ ~deberíamos~ ~mejorar~"]} />
                </div>
                <span className="absolute -right-[3px] -bottom-[3px] size-[5px] bg-black" />
              </div>
            </div>
            <Row h="h-[69px]" n="4" last>
              <Lines rows={["Para ~los~ ~puntos~ ~de~ ~mejora,~ ~indicar~ ~las~ ~acciones~ a ~tomar~ y el", "~responsable.~"]} />
            </Row>
          </div>

          <div className="col-start-4 col-span-3 row-start-5 mt-[28px] mb-[2px] border-y border-l border-[#44546a] grid grid-cols-[446px_404px_218px] grid-rows-[25px_1fr]">
            <div className="border-r border-b border-[#44546a] pl-px flex items-end whitespace-nowrap">
              <div>{spell("~Nota~ ~promedio~ ~de~ 1-2")}</div>
            </div>
            <div className="border-r border-b border-[#44546a] pl-px flex items-end whitespace-nowrap">
              <div>{spell("~Nota~ ~Promedio~ ~de~ 3-4")}</div>
            </div>
            <div className="border-b border-[#44546a] pl-px flex items-end whitespace-nowrap">
              <div>{spell("~Nota~ ~Promedio~ > 4")}</div>
            </div>
            <RightCell top rows={["*) ~Miembros~ ~de~ ~equipo~ ~ausentes~ o en ~otras~", "~actividades.~", "*) ~Tiempo~ ~de~ ~duración~ mayor a 45 ~mins.~", "*) ~Discusión~ ~de~ ~temas~ ~fuera~ ~del~ ~proyecto~ ~de~", "~clase.~"]} />
            <RightCell top rows={["*) ~Todos~ ~los~ ~miembros~ ~presentes.~", "*) ~Tiempo~ ~de~ ~duración~ mayor a 45 ~mins.~", "*) ~Temas~ ~de~ ~discusión~ ~relacionados~ con el", "~proyecto~ ~de~ ~clase.~"]} />
            <RightCell top last rows={["*) ~Todos~ ~los~ ~miembros~ ~presentes.~", "*) ~Tiempo~ ~de~ ~duración~ mayor a 45", "~mins.~", "*) ~Temas~ ~de~ ~discusión~ ~relacionados~ con el", "~proyecto~ ~de~ ~clase.~", "*) ~Enviar~ ~resumen~ ~de~ ~la~ reunión al", "~catedrático.~"]} />
          </div>
        </div>
      </div>
    </div>
  );
}

function StatusCell({ w, children, right }: { w: string; children?: ReactNode; right?: boolean }) {
  return (
    <div className={`${w} shrink-0 my-[2px] border-l border-[#9c9c9a] first:border-l-0 flex items-center ${right ? "justify-center" : "pl-[8px]"}`}>
      {children}
    </div>
  );
}

export default function App() {
  return (
    <div className={`${UI} w-[1920px] h-[1080px] overflow-hidden flex flex-col bg-[#f2f1f0] text-[#3c3c3c]`}>
      <div className="h-[24px] shrink-0 flex items-center bg-linear-to-b from-[#5a574e] to-[#3d3c37] text-[#dfdbd2]">
        <span className="pl-[5px] text-[15px] tracking-[0.4px] font-medium whitespace-nowrap">2017IV-1464_INGENIERIA_SOFTWARE_I_PROYECTO_RUBRICA (1).xlsx - LibreOffice Calc</span>
        <div className="ml-auto flex items-center h-full text-[15px] text-[#dfdbd2]">
          <svg width="22" height="16" viewBox="0 0 22 16" fill="none" stroke="#dfdbd2" strokeWidth="1.5">
            <path d="M1 5c6-5 14-5 20 0M4 8c4-3 10-3 14 0M7 11c2-2 6-2 8 0" />
            <circle cx="11" cy="14" r="1" fill="#dfdbd2" />
          </svg>
          <span className="ml-[11px] w-[20px] h-[20px] rounded-[2px] bg-[#e4e1da] text-[#3c3b37] text-[12px] font-bold flex items-center justify-center">Es</span>
          <svg className="ml-[10px]" width="10" height="18" viewBox="0 0 10 18" fill="none" stroke="#dfdbd2" strokeWidth="1.3">
            <path d="M1 5l8 8-4 4V1l4 4-8 8" />
          </svg>
          <svg className="ml-[13px]" width="24" height="13" viewBox="0 0 24 13" fill="#8e8b82" stroke="#dfdbd2">
            <rect x=".5" y=".5" width="21" height="12" rx="1.5" />
            <path d="M22 4h2v5h-2z" />
            <path d="M7 9l7-3-1 3 3-4" stroke="#fff" />
          </svg>
          <span className="ml-[4px] w-[46px] text-[#c9c6bc]">(100%)</span>
          <svg className="ml-[12px]" width="18" height="16" viewBox="0 0 18 16" fill="none" stroke="#dfdbd2" strokeWidth="1.3">
            <path d="M1 5h3l4-4v14l-4-4H1z" fill="#dfdbd2" />
            <path d="M11 5c1 2 1 4 0 6M13.5 3c2 3 2 7 0 10" />
            <path d="M16 1c2.5 4 2.5 10 0 14" opacity=".4" />
          </svg>
          <span className="ml-[14px] w-[36px]">23:57</span>
          <svg className="ml-[13px] mr-[8px]" width="16" height="16" viewBox="0 0 16 16" fill="none" stroke="#dfdbd2" strokeWidth="2">
            <circle cx="8" cy="9" r="5" />
            <path d="M8 1v6M1 6h2M13 6h2M2 14l1-1M13 13l1 1M8 14v2" />
          </svg>
        </div>
      </div>

      <div className="flex-1 min-h-0 flex">
        <Launcher />
        <div className="flex-1 min-w-0 flex flex-col">
          <div className="h-[38px] shrink-0 flex items-center pl-[3px]">
            <div className="w-[4px] h-[28px] mr-[3.5px] bg-[radial-gradient(#aaa_1px,transparent_1px)] bg-[length:3px_3px]" />
            <Tools items="new v open v save v | pdf print preview | cut copy paste v brush | undo v redo v | find abc | rows v cols v | sort sortAsc sortDesc filter | image chart pivot | omega link note header | printArea freeze v split | navigator" />
          </div>
          <div className="h-[40px] shrink-0 flex items-center pl-[3px]">
            <div className="w-[4px] h-[28px] mr-[6.5px] bg-[radial-gradient(#aaa_1px,transparent_1px)] bg-[length:3px_3px]" />
            <Combo w="w-[141px]" text="Calibri" italic />
            <div className="w-[10px] shrink-0" />
            <Combo w="w-[71px]" text="11" />
            <div className="w-[2px] shrink-0" />
            <Tools items="| bold italic underline v | fontColor v highlight v | left! center right | wrap! merge! | top middle bottom! | currency v percent number date | addDec remDec | indent outdent | borders v borderStyle v borderColor v | cond v" />
          </div>

          <div className="flex-1 min-h-0 flex">
            <div className="flex-1 min-w-0 flex flex-col">
              <div className="h-[35px] shrink-0 flex items-center">
                <div className="w-[1px] shrink-0" />
                <Combo w="w-[155px]" text="C21" />
                <div className="w-[2px] shrink-0" />
                <Tools items="| fx sigma equal |" />
                <div className="flex-1 h-[21px] ml-[1px] rounded-[4px] border border-[#b9b9b7] bg-white pl-[1px] text-[14.5px] leading-[19px] text-[#444]">
                  Detallar en un documento:
                </div>
                <div className="w-[17px] h-[21px] ml-[4px] mr-[7px] rounded-[4px] border border-[#b9b9b7] flex items-center justify-center">
                  <span className="border-x-[5px] border-x-transparent border-t-[6px] border-t-[#333]" />
                </div>
              </div>

              <div className="flex-1 min-h-0 flex">
                <Sheet />
                <div className="w-[16px] shrink-0 flex flex-col">
                  <div className="h-[6px] mb-[2px] bg-[#bbb] flex items-center justify-center">
                    <span className="w-[8px] h-px bg-black" />
                  </div>
                  <div className="flex-1 ml-px mr-px bg-[#f39069]" />
                </div>
              </div>

              <div className="h-[14px] shrink-0 flex">
                <div className="w-[813px] bg-[#f39069]" />
                <div className="ml-auto mr-[16px] w-[5px] bg-[#b5b5b3] flex justify-center">
                  <span className="w-px h-[9px] mt-[2px] bg-black" />
                </div>
              </div>
              <div className="h-[21px] shrink-0 flex items-center">
                <div className="w-[92px] flex items-center pl-[13px] gap-[12px]">
                  <svg width="7" height="10" viewBox="0 0 7 10" fill="#c4c4c2"><path d="M0 0h1v10H0zM7 0v10L2 5z" /></svg>
                  <svg width="7" height="10" viewBox="0 0 7 10" fill="#c4c4c2"><path d="M6 0v10L1 5z" /></svg>
                  <svg width="7" height="10" viewBox="0 0 7 10" fill="#c4c4c2"><path d="M1 0v10l5-5z" /></svg>
                  <svg width="7" height="10" viewBox="0 0 7 10" fill="#c4c4c2"><path d="M0 0v10l5-5zM6 0h1v10H6z" /></svg>
                </div>
                <svg className="ml-[3px]" width="14" height="14" viewBox="0 0 14 14" fill="#3c3c3c"><path d="M5 1h4v4h4v4H9v4H5V9H1V5h4z" /></svg>
                <div className="ml-[10px] w-[114px] h-full bg-white border-x border-b border-[#a9a9a7] flex items-center justify-center text-[12px] font-bold text-[#333]">
                  Rubrica Puntaje
                </div>
              </div>
            </div>

            <div className="w-[47px] shrink-0 flex border-t border-[#bdbdbb] -mt-px">
              <div className="w-[6px] border-l border-[#b5b5b3] flex items-center">
                <div className="w-[5px] h-[72px] bg-[#a8a8a6]" />
              </div>
              <div className="flex-1 border-l border-[#c8c8c6] flex flex-col items-center pt-[13px]">
                <svg width="12" height="14" viewBox="0 0 12 14" fill="none" stroke="#3a5a8a">
                  <path d="M1 1.5h8M1 4.5h8M1 7.5h8" />
                  <path d="M7 10h5l-2.5 3z" fill="#222" stroke="none" />
                </svg>
                <div className="w-[26px] h-px mt-[11px] bg-[#dcdcda]" />
                <div className="w-[32px] h-[32px] mt-[4px] rounded-[3px] border border-[#bdbdbb] flex items-center justify-center">
                  <Svg s={24}>{icons.wrench}</Svg>
                </div>
                <div className="mt-[8px]"><Svg>{icons.sideProps}</Svg></div>
                <div className="mt-[9px]"><Svg>{icons.gallery}</Svg></div>
                <div className="mt-[11px]"><Svg>{icons.compass}</Svg></div>
                <div className="mt-[11px]"><Svg>{icons.fx}</Svg></div>
              </div>
            </div>
          </div>

          <div className="h-[21px] shrink-0 flex border-t border-[#b5b5b3] text-[11.8px] text-[#444]">
            <StatusCell w="w-[348px]"><span className="pl-[2px]">Sheet 1 of 1</span></StatusCell>
            <StatusCell w="w-[345px]" />
            <StatusCell w="w-[435px]">PageStyle_Rubrica Puntaje</StatusCell>
            <StatusCell w="w-[68px]" />
            <StatusCell w="w-[29px]" right>
              <svg width="12" height="12" viewBox="0 0 12 12" fill="#888"><path d="M0 1h9v10H0z" /><path d="M10 0h2M11 0v12M10 12h2" stroke="#888" fill="none" /></svg>
            </StatusCell>
            <StatusCell w="w-[28px]" right>
              <svg width="10" height="14" viewBox="0 0 10 14" fill="none" stroke="#999"><path d="M.5.5h9v13h-9zM3 6l2 3 3-6" /></svg>
            </StatusCell>
            <StatusCell w="w-[30px]" />
            <StatusCell w="w-[381px]" right>Average: ; Sum: 0</StatusCell>
            <StatusCell w="w-[143px]">
              <span className="w-[7px] h-[2px] ml-[2px] bg-[#666]" />
              <div className="relative ml-[7px] w-[97px] h-[2px] bg-[#b5b5b3]">
                <span className="absolute left-[47px] -top-[4px] size-[9px] rounded-full bg-white border border-[#888]" />
              </div>
              <svg className="ml-[6px]" width="9" height="9" viewBox="0 0 9 9" fill="#666"><path d="M3.5 0h2v3.5H9v2H5.5V9h-2V5.5H0v-2h3.5z" /></svg>
            </StatusCell>
            <StatusCell w="w-[48px]">130%</StatusCell>
          </div>
        </div>
      </div>
    </div>
  );
}
